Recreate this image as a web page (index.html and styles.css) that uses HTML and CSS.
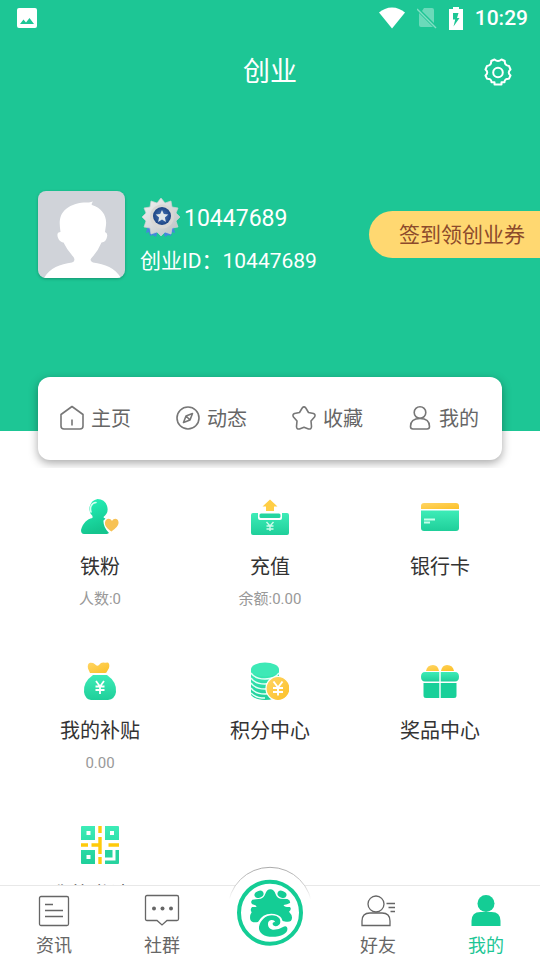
FILE: index.html
```html
<!DOCTYPE html>
<html lang="zh-CN">
<head>
<meta charset="utf-8">
<meta name="viewport" content="width=device-width, initial-scale=1">
<title>创业</title>
<link rel="stylesheet" href="styles.css">
</head>
<body>
<svg class="defs" aria-hidden="true">
  <defs>
    <linearGradient id="green" x1="0" y1="0" x2="0" y2="1"><stop offset="0" stop-color="#3decb7"/><stop offset="1" stop-color="#1fcf9a"/></linearGradient>
    <linearGradient id="mint" x1="0" y1="0" x2="0.3" y2="1"><stop offset="0" stop-color="#26f5bc"/><stop offset="1" stop-color="#14c58e"/></linearGradient>
    <linearGradient id="gold" x1="0" y1="0" x2="1" y2="1"><stop offset="0" stop-color="#ffd564"/><stop offset="1" stop-color="#fcc027"/></linearGradient>
    <linearGradient id="arc" x1="0" y1="0" x2="0" y2="1"><stop offset="0" stop-color="#aaa"/><stop offset="0.2" stop-color="#ccc"/><stop offset="0.38" stop-color="#fff"/></linearGradient>
    <linearGradient id="silver" x1="0" y1="0" x2="1" y2="1"><stop offset="0" stop-color="#f4f4f4"/><stop offset="1" stop-color="#b9bfc2"/></linearGradient>
    <radialGradient id="navy"><stop offset="0" stop-color="#4a79bb"/><stop offset="1" stop-color="#1c4484"/></radialGradient>
  </defs>
</svg>
<div class="app">
  <main class="content">
    <section class="hero">
      <div class="banner">
        <div class="status">
          <svg width="20" height="20" viewBox="0 0 20 20"><path fill="#fff" fill-rule="evenodd" d="M2 0h16a2 2 0 0 1 2 2v16a2 2 0 0 1-2 2H2a2 2 0 0 1-2-2V2a2 2 0 0 1 2-2zM3 16h14l-4.500-6-3.500 4.500L6.500 11.500z"/></svg>
          <div class="status-right">
            <svg width="26" height="22" viewBox="0 0 26 22"><path fill="#fff" d="M0 5.500C3.500 2.500 8 .5 13 .5s9.500 2 13 5L13 21.500z"/></svg>
            <svg width="20" height="22" viewBox="0 0 20 22"><path fill="#fff" opacity=".35" d="M7 1h8a2 2 0 0 1 2 2v13L5 4zM2 6l14 14H4a2 2 0 0 1-2-2z"/><path stroke="#fff" stroke-opacity=".45" stroke-width="1.500" d="M0 2l19 19"/></svg>
            <svg width="14" height="23" viewBox="0 0 14 23"><path fill="#fff" fill-rule="evenodd" d="M4 0h6v2h4v21H0V2h4zM4 6v6.500h2.200L4.500 19.500 10.500 11H8l1.500-5z"/></svg>
            <time>10:29</time>
          </div>
        </div>
        <header class="titlebar">
          <h1>创业</h1>
          <button class="settings" type="button" aria-label="设置">
            <svg width="28" height="28" viewBox="0 0 28 28" fill="none" stroke="#fff" stroke-width="2" stroke-linejoin="round"><path d="M10.500 1.500Q14 4.500 17.500 1.500L20.800 3Q20.500 7.500 25 8L26.500 11.500Q23 14.500 26.500 17.500L25 20.700Q20.500 20.500 20.500 24.200L17.500 24.200V26.500H10.500V24.200L7.500 24.200Q7.500 20.500 3 20.700L1.500 17.500Q5 14.500 1.500 11.500L3 8Q7.500 7.500 7.200 3Z"/><circle cx="14" cy="14.500" r="4.800"/></svg>
          </button>
        </header>
        <div class="profile">
          <svg class="avatar" viewBox="0 0 87 87" aria-hidden="true"><rect width="87" height="87" fill="#d0d3d9"/><path fill="#fff" d="M6 87C12 77 22 73 34 71.500Q38 70 35.500 66Q29 59 25.500 51.500C20 51 18 43 20.500 41.500L22.500 41C21 31 21 24 28 18C34 12.500 44 11 51 11.500L55 10.500Q53 13 54 14C64 17 69 25 68 34L67 41Q70 42 69 46Q68 51 63.500 51.500Q60 60 53.500 67Q51 70 55 71.500C67 73 77 77 83 87z"/></svg>
          <div class="who">
            <div class="name">
              <svg width="40" height="40" viewBox="0 0 40 40"><path fill="#4487dc" d="M8 26l10 6-2 7-3-2-3 1-1-4-3 1zM33 26l-10 6 2 7 3-2 3 1 1-4 3 1z"/><path fill="url(#silver)" stroke="#cdd3d3" stroke-width=".7" d="M21 0l4 5 6-2 1 6 6 1-2 5 4 4-4 4 2 6-6 1-1 6-6-2-4 4-4-4-6 2-1-6-6-1 2-6-4-4 4-4-2-5 6-1 1-6 6 2z"/><circle cx="22" cy="18.500" r="12" fill="#d7d7d5"/><circle cx="22" cy="18" r="9" fill="url(#navy)"/><path fill="#e0e6e9" d="M22 12l1.800 4.100 4.500.4-3.400 3 1 4.500-3.900-2.400-3.900 2.400 1-4.500-3.400-3 4.500-.4z"/></svg>
              <span>10447689</span>
            </div>
            <p class="uid">创业ID：10447689</p>
          </div>
          <button class="checkin" type="button">签到领创业券</button>
        </div>
      </div>
      <nav class="shortcuts">
        <a href="#home"><svg width="26" height="26" viewBox="0 0 26 26"><path d="M2 9.500L13 1.500l11 8V21a3 3 0 0 1-3 3H5a3 3 0 0 1-3-3zM13 14.500v6"/></svg>主页</a>
        <a href="#feed"><svg width="26" height="26" viewBox="0 0 26 26"><circle cx="13" cy="13" r="11"/><path d="M17.500 8.500l-2.500 6.500-6.500 2.500L11 11zM11 11l4 4"/></svg>动态</a>
        <a href="#favorites"><svg width="26" height="26" viewBox="0 0 26 26"><path d="M11.200 3Q13 .7 14.800 3L17.500 7.500 22.500 8.500Q25 9.500 23.500 12L20 16 20.500 21.500Q20.500 24.500 17.500 24L13 22.200 8.500 24Q5.500 24.500 5.500 21.500L6 16 2.500 12Q1 9.500 3.500 8.500L8.500 7.500z"/></svg>收藏</a>
        <a href="#mine"><svg width="26" height="26" viewBox="0 0 26 26"><circle cx="13" cy="7.500" r="5.800"/><path d="M3.500 21.500C3.500 16.500 7 13.500 13 13.500s9.500 3 9.500 8Q22.500 24 20 24H6Q3.500 24 3.500 21.500z"/></svg>我的</a>
      </nav>
    </section>
    <section class="grid">
      <a class="tile" href="#fans">
        <svg width="38" height="38" viewBox="0 0 38 38"><path fill="url(#mint)" d="M16.500 1a10 10 0 0 1 6 18l.5 1Q26 20 22.500 22.500 22 29 28 35L26 36H3Q0 36 0 32C2 25 6 21 11.500 20V18A10 10 0 0 1 16.500 1z"/><path d="M10 14C8.500 9 10.500 5 15 4.500" fill="none" stroke="#d6fff1" stroke-width="1.600" stroke-linecap="round"/><path fill="#f7c255" d="M30.500 33.500C26 30.500 23.500 27.500 24 24.500c.5-4 5-5 7-1.500 2-3.500 6-2.500 6.500 1 .5 3.500-3 6.500-7 9.500z"/></svg>
        <strong>铁粉</strong><small>人数:0</small>
      </a>
      <a class="tile" href="#recharge">
        <svg width="38" height="38" viewBox="0 0 38 38"><path fill="url(#green)" d="M2 15h5v5Q7 22 9 22h20q2 0 2-2v-5h5q2 0 2 2v18q0 2-2 2H2q-2 0-2-2V17q0-2 2-2z"/><rect x="8.500" y="15.500" width="21" height="4.500" rx="1.500" fill="#25d5a0"/><path fill="#ffce45" d="M19 1.500l7.500 7H23v4.500h-8V8.500h-3.500z"/><path d="M15.500 24l3.500 4 3.500-4M19 28v5M15.500 28h7M15.500 31h7" fill="none" stroke="#cffbeb" stroke-width="1.400"/></svg>
        <strong>充值</strong><small>余额:0.00</small>
      </a>
      <a class="tile" href="#cards">
        <svg width="38" height="38" viewBox="0 0 38 38"><path fill="url(#gold)" d="M3 5h32q3 0 3 3v3H0V8q0-3 3-3z"/><path fill="url(#green)" d="M0 12.500h38V30q0 3-3 3H3q-3 0-3-3z"/><path stroke="#c5ffeb" stroke-width="1.800" d="M3 21.500h11M3 24.500h6"/></svg>
        <strong>银行卡</strong>
      </a>
      <a class="tile" href="#subsidy">
        <svg width="38" height="38" viewBox="0 0 38 38"><path fill="url(#gold)" d="M9 11L7 6.500Q6 2 9 .8 12 .5 14 2.200 16 5 18.500 2.500 20 0 24 .8L27 .5Q29 2 28 6L26 9.500Q25.500 11 24 11z"/><path fill="url(#green)" d="M12 13h14q10 7 9 17-1 7-8 8H10q-6-1-7-8-1-10 9-17z"/><path d="M15 19l4 5.500 4-5.500M19 24v8M14.500 24.500h9M14.500 28h9" fill="none" stroke="#fff" stroke-width="1.800"/></svg>
        <strong>我的补贴</strong><small>0.00</small>
      </a>
      <a class="tile" href="#points">
        <svg width="38" height="38" viewBox="0 0 38 38"><path fill="url(#green)" d="M0 7h28v25q-4 6-14 6T0 33z"/><path d="M0 11q4 6 14 6t14-6M0 16q4 6 14 6t14-6M0 21q4 6 14 6t14-6M0 26q4 6 14 6t14-6M0 31q4 5 14 5" fill="none" stroke="#e6fff7" stroke-width="1.400"/><ellipse cx="14" cy="7.500" rx="14" ry="7" fill="#3de9b6"/><circle cx="27" cy="26.500" r="12" fill="url(#gold)" stroke="#fff" stroke-width="1.200"/><path d="M22.500 19.500l4.500 6 4.500-6M27 25v8.500M22 26h10M22 30h10" fill="none" stroke="#fff" stroke-width="1.900"/></svg>
        <strong>积分中心</strong>
      </a>
      <a class="tile" href="#prizes">
        <svg width="38" height="38" viewBox="0 0 38 38"><path fill="url(#gold)" d="M5 9q1-6 7-6 5 0 6 6zM20 9q1-6 6-6 6 0 7 6z"/><path fill="url(#green)" d="M4 10h14.300v9.500H4Q0 19.500 0 14.700 0 10 4 10zM19.700 10H34q4 0 4 4.700 0 4.800-4 4.800H19.700z"/><path fill="#18d099" d="M2.500 21h15.800v15H5q-2.500 0-2.500-2.500zM19.700 21h15.800v12.500q0 2.500-2.500 2.500H19.700z"/></svg>
        <strong>奖品中心</strong>
      </a>
      <a class="tile" href="#invite">
        <svg width="38" height="38" viewBox="0 0 38 38"><path fill="url(#green)" fill-rule="evenodd" d="M1 0h13v14H0V1q0-1 1-1zM5.500 5v4h4V5zM24 0h13q1 0 1 1v13H24zM29 5v4h4V5zM0 24h14v14H1q-1 0-1-1zM5.500 29v4h4v-4z"/><path fill="#28d39f" d="M24 24h7.500v7.500H24zM34.500 24H38v13q0 1-1 1H24v-3.500h10.500z"/><path fill="#ffca0b" d="M17.300 0h3.400v7h-3.400zM17.300 11h3.400v17h-3.400zM17.300 31h3.400v7h-3.400zM0 17.300h7v3.400H0zM10.500 17.300H18v3.400h-7.500zM27.500 17.300H38v3.400H27.500z"/></svg>
        <strong>我的邀请码</strong>
      </a>
    </section>
  </main>
  <nav class="tabbar">
    <a href="#news"><svg width="36" height="36" viewBox="0 0 36 36"><rect x="3.500" y="3.500" width="29" height="29" rx="1.500"/><path d="M9 11.500h8M9 17.500h18M9 23.500h18"/></svg>资讯</a>
    <a href="#groups"><svg width="36" height="36" viewBox="0 0 36 36"><path d="M3 2.500h30q1.500 0 1.500 1.500v22q0 1.500-1.500 1.500H23L18 32l-5-4.500H3q-1.500 0-1.500-1.500V4q0-1.500 1.500-1.500z"/><g class="dots"><circle cx="10" cy="15.500" r="2"/><circle cx="18.500" cy="15.500" r="2"/><circle cx="27" cy="15.500" r="2"/></g></svg>社群</a>
    <a class="center" href="#main" aria-label="首页">
      <svg width="84" height="84" viewBox="36 33 252 252">
        <circle cx="162" cy="163" r="126" fill="#fff" stroke="url(#arc)" stroke-width="3"/>
        <circle cx="162" cy="173" r="93" fill="#fff" stroke="#14cd95" stroke-width="12"/>
        <g fill="#14cd95">
          <ellipse cx="129" cy="118" rx="14" ry="10" transform="rotate(-22 129 118)"/>
          <ellipse cx="198" cy="118" rx="14" ry="10" transform="rotate(22 198 118)"/>
          <path d="M163 103Q174 103 179 118Q183 130 194 131L214 132Q224 136 222 144Q214 148 203 150Q203 155 213 156H222Q228 163 219 170Q229 180 228 189Q227 203 210 200L200 198Q197 181 175 177Q142 172 126 201Q108 205 103 194Q100 182 107 172Q101 164 108 156H121Q123 151 109 148Q102 141 109 134L134 131Q144 128 148 116Q153 103 163 103z"/>
          <path d="M181 183C158 174 134 190 129 215C126 237 151 248 178 245C204 243 219 230 213 217Q209 211 201 216Q188 225 170 224Q157 221 156 209Q155 197 166 195Q175 194 178 202Q175 200 170 204Q169 212 178 214Q191 213 193 202Q194 189 181 183z"/>
        </g>
      </svg>
    </a>
    <a href="#friends"><svg width="36" height="36" viewBox="0 0 36 36"><circle cx="16" cy="11" r="8"/><path d="M2 32.500V28q0-8 8-8h12q8 0 8 8v4.500zM26.500 10.500H35M28.500 14.500H35M30.500 18.500H35"/></svg>好友</a>
    <a class="active" href="#me"><svg width="36" height="36" viewBox="0 0 36 36"><circle cx="18" cy="10.500" r="8.500"/><path d="M3.500 33v-5q0-9 9-9h11q9 0 9 9v5z"/></svg>我的</a>
  </nav>
</div>
</body>
</html>
```
FILE: styles.css
```css
* { box-sizing: border-box; }

body {
  margin: 0;
  background: #fff;
  color: #333;
  font-family: Roboto, "Noto Sans CJK SC", sans-serif;
}

h1, p { margin: 0; font-weight: 400; }
a { color: inherit; text-decoration: none; }
button { border: 0; padding: 0; background: none; font: inherit; color: inherit; cursor: pointer; }
svg { display: block; flex: none; }
.defs { position: absolute; width: 0; height: 0; }

.app { display: flex; flex-direction: column; height: 100vh; }
.content { flex: 1; min-height: 0; overflow-y: auto; scrollbar-width: none; }

.hero { overflow: hidden; padding-bottom: 8px; }
.banner { background: #1dc695; color: #fff; padding-bottom: 148px; }

.status {
  display: flex;
  align-items: center;
  justify-content: space-between;
  height: 36px;
  padding: 0 12px 0 17px;
}
.status-right { display: flex; align-items: center; gap: 12px; }
.status time { font-size: 21px; font-weight: 500; line-height: 36px; }

.titlebar {
  display: grid;
  grid-template-columns: 1fr auto 1fr;
  align-items: center;
  height: 72px;
  padding: 0 28px;
}
.titlebar h1 { grid-column: 2; font-size: 27px; line-height: 40px; }
.settings { justify-self: end; }

.profile { display: flex; align-items: flex-start; padding: 83px 0 0 38px; }
.avatar { width: 87px; height: 87px; border-radius: 8px; box-shadow: 0 1px 3px rgba(0, 0, 0, .25); }
.who { flex: 1; padding: 6px 0 0 15px; white-space: nowrap; }
.name { display: flex; align-items: center; gap: 4px; height: 42px; font-size: 23px; }
.uid { font-size: 21px; line-height: 44px; }
.checkin {
  height: 47px;
  margin-top: 20px;
  padding: 0 15px 4px 30px;
  border-radius: 24px 0 0 24px;
  background: #ffd871;
  color: #8c4a2b;
  font-size: 21px;
}

.shortcuts {
  position: relative;
  display: grid;
  grid-template-columns: repeat(4, 1fr);
  height: 83px;
  margin: -54px 38px 0;
  border-radius: 12px;
  background: #fff;
  box-shadow: 0 3px 10px rgba(0, 0, 0, .35);
  color: #666;
  font-size: 20px;
}
.shortcuts a { display: flex; align-items: center; justify-content: center; gap: 6px; padding: 0 2px 2px 0; }
.shortcuts svg { fill: none; stroke: #777; stroke-width: 1.6; stroke-linejoin: round; }

.grid { display: grid; grid-template-columns: repeat(3, 1fr); grid-auto-rows: 164px; padding: 30px 15px 0; }
.tile { display: flex; flex-direction: column; align-items: center; }
.tile strong { margin-top: 16px; font-size: 20px; font-weight: 400; line-height: 30px; }
.tile small { margin-top: 5px; color: #999; font-size: 15px; line-height: 24px; }

.tabbar {
  position: relative;
  display: grid;
  grid-template-columns: repeat(5, 1fr);
  height: 75px;
  border-top: 1px solid #e8e8e8;
  background: #fff;
  color: #666;
  font-size: 18px;
  line-height: 28px;
}
.tabbar a { display: flex; flex-direction: column; align-items: center; padding-top: 7px; gap: 3px; }
.tabbar svg { fill: none; stroke: #666; stroke-width: 1.3; }
.tabbar .dots { fill: #666; stroke: none; }
.tabbar .center { padding: 0; margin-top: -20px; }
.tabbar .center svg { stroke: none; }
.tabbar .active { color: #1dc695; }
.tabbar .active svg { fill: #14cd95; stroke: none; }
```
